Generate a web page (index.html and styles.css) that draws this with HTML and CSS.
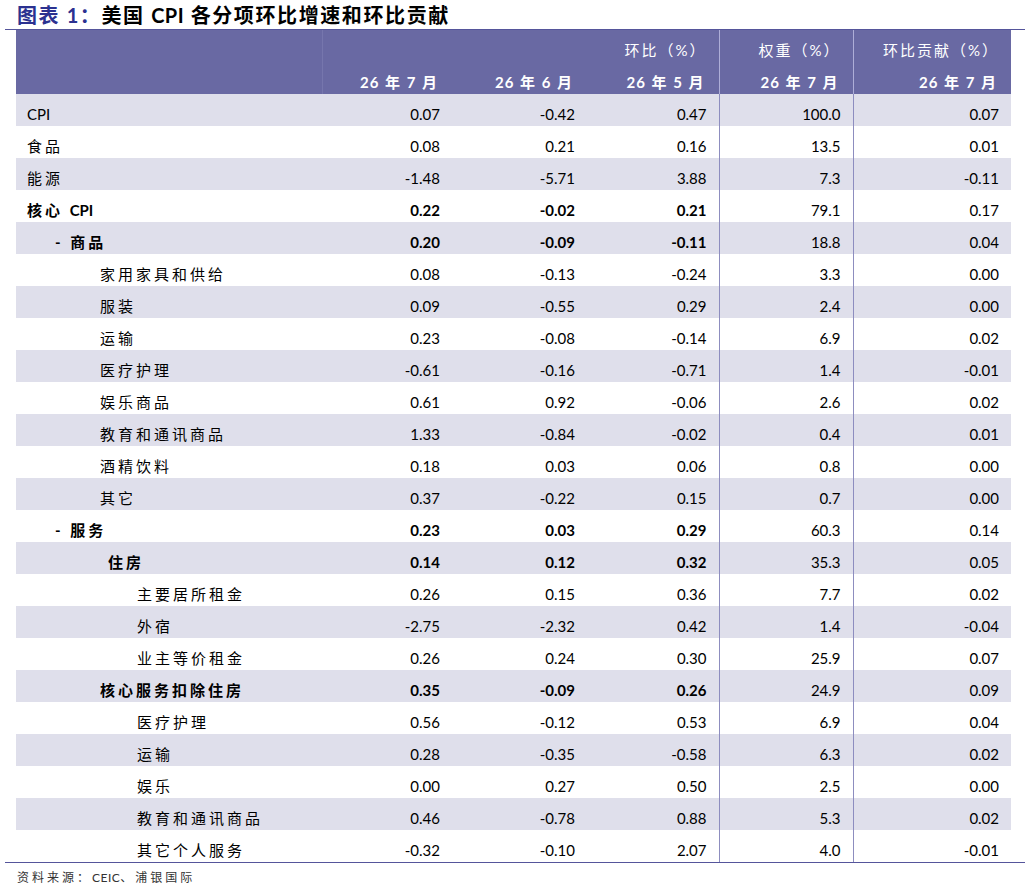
FILE: index.html
```html
<!DOCTYPE html>
<html lang="zh-CN">
<head>
<meta charset="utf-8">
<title>美国 CPI 各分项环比增速和环比贡献</title>
<link rel="stylesheet" href="styles.css">
</head>
<body>
<div class="page">
  <h1 class="title"><span class="fig">图表 1：</span>美国 <span class="lat">CPI</span> 各分项环比增速和环比贡献</h1>
  <div class="frame">
    <table class="data">
      <colgroup>
        <col class="c-label"><col class="c1"><col class="c2"><col class="c3"><col class="c4"><col class="c5">
      </colgroup>
      <thead>
        <tr>
          <th class="lab"></th>
          <th class="sep-faint" colspan="3">环比（%）</th>
          <th class="sep">权重（%）</th>
          <th class="sep">环比贡献（%）</th>
        </tr>
        <tr class="dates">
          <th class="lab"></th>
          <th class="sep-faint">26 年 7 月</th>
          <th>26 年 6 月</th>
          <th>26 年 5 月</th>
          <th class="sep">26 年 7 月</th>
          <th class="sep">26 年 7 月</th>
        </tr>
      </thead>
      <tbody>
        <tr><td class="l0"><span class="lat">CPI</span></td><td>0.07</td><td>-0.42</td><td>0.47</td><td class="sep">100.0</td><td class="sep">0.07</td></tr>
        <tr><td class="l0">食品</td><td>0.08</td><td>0.21</td><td>0.16</td><td class="sep">13.5</td><td class="sep">0.01</td></tr>
        <tr><td class="l0">能源</td><td>-1.48</td><td>-5.71</td><td>3.88</td><td class="sep">7.3</td><td class="sep">-0.11</td></tr>
        <tr class="strong"><td class="l0">核心 <span class="lat">CPI</span></td><td>0.22</td><td>-0.02</td><td>0.21</td><td class="sep">79.1</td><td class="sep">0.17</td></tr>
        <tr class="strong"><td class="l1">-&nbsp;商品</td><td>0.20</td><td>-0.09</td><td>-0.11</td><td class="sep">18.8</td><td class="sep">0.04</td></tr>
        <tr><td class="l2">家用家具和供给</td><td>0.08</td><td>-0.13</td><td>-0.24</td><td class="sep">3.3</td><td class="sep">0.00</td></tr>
        <tr><td class="l2">服装</td><td>0.09</td><td>-0.55</td><td>0.29</td><td class="sep">2.4</td><td class="sep">0.00</td></tr>
        <tr><td class="l2">运输</td><td>0.23</td><td>-0.08</td><td>-0.14</td><td class="sep">6.9</td><td class="sep">0.02</td></tr>
        <tr><td class="l2">医疗护理</td><td>-0.61</td><td>-0.16</td><td>-0.71</td><td class="sep">1.4</td><td class="sep">-0.01</td></tr>
        <tr><td class="l2">娱乐商品</td><td>0.61</td><td>0.92</td><td>-0.06</td><td class="sep">2.6</td><td class="sep">0.02</td></tr>
        <tr><td class="l2">教育和通讯商品</td><td>1.33</td><td>-0.84</td><td>-0.02</td><td class="sep">0.4</td><td class="sep">0.01</td></tr>
        <tr><td class="l2">酒精饮料</td><td>0.18</td><td>0.03</td><td>0.06</td><td class="sep">0.8</td><td class="sep">0.00</td></tr>
        <tr><td class="l2">其它</td><td>0.37</td><td>-0.22</td><td>0.15</td><td class="sep">0.7</td><td class="sep">0.00</td></tr>
        <tr class="strong"><td class="l1">-&nbsp;服务</td><td>0.23</td><td>0.03</td><td>0.29</td><td class="sep">60.3</td><td class="sep">0.14</td></tr>
        <tr class="strong"><td class="l2h">住房</td><td>0.14</td><td>0.12</td><td>0.32</td><td class="sep">35.3</td><td class="sep">0.05</td></tr>
        <tr><td class="l3">主要居所租金</td><td>0.26</td><td>0.15</td><td>0.36</td><td class="sep">7.7</td><td class="sep">0.02</td></tr>
        <tr><td class="l3">外宿</td><td>-2.75</td><td>-2.32</td><td>0.42</td><td class="sep">1.4</td><td class="sep">-0.04</td></tr>
        <tr><td class="l3">业主等价租金</td><td>0.26</td><td>0.24</td><td>0.30</td><td class="sep">25.9</td><td class="sep">0.07</td></tr>
        <tr class="strong"><td class="l2">核心服务扣除住房</td><td>0.35</td><td>-0.09</td><td>0.26</td><td class="sep">24.9</td><td class="sep">0.09</td></tr>
        <tr><td class="l3">医疗护理</td><td>0.56</td><td>-0.12</td><td>0.53</td><td class="sep">6.9</td><td class="sep">0.04</td></tr>
        <tr><td class="l3">运输</td><td>0.28</td><td>-0.35</td><td>-0.58</td><td class="sep">6.3</td><td class="sep">0.02</td></tr>
        <tr><td class="l3">娱乐</td><td>0.00</td><td>0.27</td><td>0.50</td><td class="sep">2.5</td><td class="sep">0.00</td></tr>
        <tr><td class="l3">教育和通讯商品</td><td>0.46</td><td>-0.78</td><td>0.88</td><td class="sep">5.3</td><td class="sep">0.02</td></tr>
        <tr><td class="l3">其它个人服务</td><td>-0.32</td><td>-0.10</td><td>2.07</td><td class="sep">4.0</td><td class="sep">-0.01</td></tr>
      </tbody>
    </table>
  </div>
  <p class="source">资料来源：<span class="lat">CEIC</span>、浦银国际</p>
</div>
</body>
</html>
```
FILE: styles.css
```css
html, body {
  margin: 0;
  padding: 0;
  background: #ffffff;
}

.page {
  font-family: Lato, "Noto Sans CJK SC", sans-serif;
  color: #000000;
}

.lat {
  letter-spacing: 0;
}

.title {
  margin: 0;
  padding-left: 17px;
  height: 29px;
  line-height: 30px;
  font-size: 20px;
  font-weight: 700;
  letter-spacing: 1.6px;
  white-space: nowrap;
}

.title .fig {
  color: #2b3190;
}

.title .lat {
  letter-spacing: 0.5px;
}

.frame {
  margin-left: 5px;
  width: 1020px;
  border-top: 1px solid #55559b;
  border-bottom: 1px solid #55559b;
}

.data {
  margin-left: 11px;
  width: 995px;
  table-layout: fixed;
  border-collapse: collapse;
  border-spacing: 0;
}

.c-label { width: 306px; }
.c1 { width: 130px; }
.c2 { width: 135px; }
.c3 { width: 132px; }
.c4 { width: 134px; }
.c5 { width: 158px; }

.data th,
.data td {
  height: 32px;
  box-sizing: border-box;
  padding: 0 12px 2px 0;
  vertical-align: bottom;
  line-height: 20px;
  text-align: right;
  font-size: 15px;
  white-space: nowrap;
}

.data thead th {
  background: #6969a3;
  color: #ffffff;
  font-weight: 400;
  letter-spacing: 2px;
}

.data thead .dates th {
  font-weight: 700;
  letter-spacing: 1px;
  word-spacing: 1px;
  padding-right: 14px;
}

.data thead th.sep {
  border-left: 1px solid #aeaed8;
}

.data thead th.sep-faint {
  border-left: 1px solid #7676ad;
}

.data tbody td.sep {
  border-left: 1px solid #8d8dbf;
}

.data tbody tr:nth-child(odd) td {
  background: #dfdfeb;
}

.data tbody td:first-child {
  text-align: left;
  letter-spacing: 3px;
}

.data tbody tr.strong td:nth-child(-n+4) {
  font-weight: 700;
}

.l0 { padding-left: 11px !important; }
.l1 { padding-left: 39px !important; }
.l2 { padding-left: 84px !important; }
.l2h { padding-left: 92px !important; }
.l3 { padding-left: 121px !important; }

.source {
  margin: 7px 0 0 17px;
  font-size: 12px;
  line-height: 16px;
  letter-spacing: 3px;
  color: #333333;
}

.source .lat {
  letter-spacing: 0.5px;
}
```
